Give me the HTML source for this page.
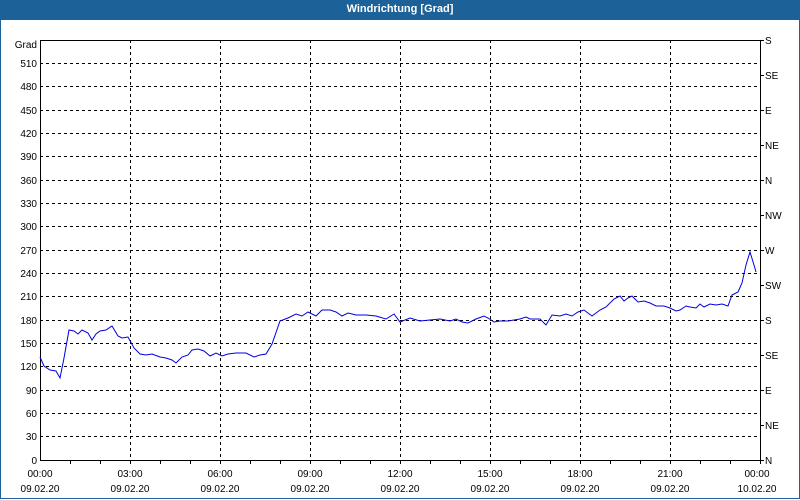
<!DOCTYPE html>
<html><head><style>
body{margin:0;width:800px;height:500px;overflow:hidden;background:#fff;font-family:"Liberation Sans",sans-serif}
.t{position:absolute;left:0;top:0;width:800px;height:20px;background:#1c6198;color:#fff;font-size:11px;font-weight:bold;text-align:center;line-height:19px}
.b{position:absolute;left:0;top:20px;width:798px;height:478px;border:1px solid #1c6198;border-top:none}
</style></head><body>
<div class="t">Windrichtung [Grad]</div><div class="b"></div>
<svg style="position:absolute;left:0;top:0" width="800" height="500" font-family="Liberation Sans, sans-serif" font-size="10" fill="#000">
<g id="g" stroke="#000" stroke-width="1" stroke-dasharray="3,3" shape-rendering="crispEdges">
<path d="M130.5 40V460M220.5 40V460M310.5 40V460M400.5 40V460M490.5 40V460M580.5 40V460M670.5 40V460"/>
<path d="M40 63.5H760M40 86.5H760M40 110.5H760M40 133.5H760M40 156.5H760M40 180.5H760M40 203.5H760M40 226.5H760M40 250.5H760M40 273.5H760M40 296.5H760M40 320.5H760M40 343.5H760M40 366.5H760M40 390.5H760M40 413.5H760M40 436.5H760"/>
</g>
<g stroke="#000" shape-rendering="crispEdges" fill="none">
<rect x="40.5" y="40.5" width="720" height="420"/>
<path d="M70.5 460v4M100.5 460v4M130.5 460v4M160.5 460v4M190.5 460v4M220.5 460v4M250.5 460v4M280.5 460v4M310.5 460v4M340.5 460v4M370.5 460v4M400.5 460v4M430.5 460v4M460.5 460v4M490.5 460v4M520.5 460v4M550.5 460v4M580.5 460v4M610.5 460v4M640.5 460v4M670.5 460v4M700.5 460v4M730.5 460v4M760.5 460v4"/>
<path d="M760 40.5h4M760 75.5h4M760 110.5h4M760 145.5h4M760 180.5h4M760 215.5h4M760 250.5h4M760 285.5h4M760 320.5h4M760 355.5h4M760 390.5h4M760 425.5h4M760 460.5h4"/>
</g>
<polyline fill="none" stroke="#0000e0" stroke-width="1" points="40,357 44,366 50,370 56,371 60,378 64,358 69,330 74,331 78,334 82,330 88,333 92,340 96,334 100,331 106,330 112,326 118,336 122,338 128,337 134,348 140,354 146,355 152,354 160,357 166,358 172,360 176,363 182,357 188,355 192,350 198,349 204,351 210,356 216,353 222,356 228,354 236,353 246,353 254,357 260,355 266,354 272,344 280,321 288,318 296,314 302,316 308,312 316,316 322,310 330,310 336,312 342,316 348,313 356,315 366,315 376,316 386,319 394,314 400,322 410,318 420,321 430,320 440,319 450,321 456,319 462,322 468,323 476,319 484,316 488,318 494,322 500,321 508,321 514,320 520,319 526,317 530,319 540,319 546,325 552,315 560,316 566,314 572,316 578,312 584,310 592,316 600,310 606,307 614,299 620,296 624,301 628,298 632,296 638,302 644,301 650,303 656,306 664,306 670,308 676,311 680,310 686,306 690,307 696,308 700,304 704,307 710,304 716,305 722,304 728,306 732,295 738,292 742,283 746,265 750,252 754,265 756,272"/>
<g text-anchor="end">
<text x="37" y="48">Grad</text>
<text x="37" y="67">510</text><text x="37" y="90">480</text><text x="37" y="114">450</text><text x="37" y="137">420</text><text x="37" y="160">390</text><text x="37" y="184">360</text><text x="37" y="207">330</text><text x="37" y="230">300</text><text x="37" y="254">270</text><text x="37" y="277">240</text><text x="37" y="300">210</text><text x="37" y="324">180</text><text x="37" y="347">150</text><text x="37" y="370">120</text><text x="37" y="394">90</text><text x="37" y="417">60</text><text x="37" y="440">30</text><text x="37" y="464">0</text>
</g>
<g>
<text x="765" y="44">S</text><text x="765" y="79">SE</text><text x="765" y="114">E</text><text x="765" y="149">NE</text><text x="765" y="184">N</text><text x="765" y="219">NW</text><text x="765" y="254">W</text><text x="765" y="289">SW</text><text x="765" y="324">S</text><text x="765" y="359">SE</text><text x="765" y="394">E</text><text x="765" y="429">NE</text><text x="765" y="464">N</text>
</g>
<g text-anchor="middle">
<text x="40" y="477">00:00</text><text x="130" y="477">03:00</text><text x="220" y="477">06:00</text><text x="310" y="477">09:00</text><text x="400" y="477">12:00</text><text x="490" y="477">15:00</text><text x="580" y="477">18:00</text><text x="670" y="477">21:00</text><text x="757" y="477">00:00</text>
<text x="40" y="492">09.02.20</text><text x="130" y="492">09.02.20</text><text x="220" y="492">09.02.20</text><text x="310" y="492">09.02.20</text><text x="400" y="492">09.02.20</text><text x="490" y="492">09.02.20</text><text x="580" y="492">09.02.20</text><text x="670" y="492">09.02.20</text><text x="757" y="492">10.02.20</text>
</g>
</svg>
</body></html>
